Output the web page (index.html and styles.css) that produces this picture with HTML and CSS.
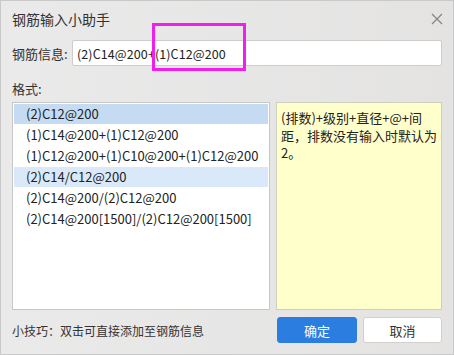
FILE: index.html
```html
<!DOCTYPE html>
<html>
  <head>
    <title>钢筋输入小助手</title>
    <link rel="stylesheet" href="styles.css">
  </head>
  <body>
    <div class="dialog">
      <div class="title-bar">
        <span class="title">钢筋输入小助手</span>
        <svg class="close" width="12" height="12" viewBox="0 0 12 12">
          <path d="M1 1L11 11M11 1L1 11" stroke="#858585" stroke-width="1.2" fill="none" />
        </svg>
      </div>

      <div class="field-row">
        <label for="rebar">钢筋信息:</label>
        <input id="rebar" type="text" value="(2)C14@200+(1)C12@200">
      </div>

      <div class="format-label">格式:</div>

      <div class="main">
        <ul class="format-list">
          <li class="selected">(2)C12@200</li>
          <li>(1)C14@200+(1)C12@200</li>
          <li>(1)C12@200+(1)C10@200+(1)C12@200</li>
          <li class="hover">(2)C14/C12@200</li>
          <li>(2)C14@200/(2)C12@200</li>
          <li>(2)C14@200[1500]/(2)C12@200[1500]</li>
        </ul>
        <div class="note">(排数)+级别+直径+@+间距，排数没有输入时默认为2。</div>
      </div>

      <div class="footer">
        <span class="tip">小技巧：双击可直接添加至钢筋信息</span>
        <button class="btn primary">确定</button>
        <button class="btn">取消</button>
      </div>

      <div class="mark"></div>
    </div>
  </body>
</html>
```

FILE: styles.css
```css
/* Reset */
body,
ul,
li {
  margin: 0;
  padding: 0;
}

body {
  font-family: "Noto Sans CJK SC", "Noto Sans", sans-serif;
  font-size: 13px;
  color: #333;
}

.dialog {
  position: relative;
  width: 454px;
  height: 355px;
  box-sizing: border-box;
  border: 1px solid #c9c9c9;
  background: linear-gradient(to right, #eaeaea, #e4e3e2);
  padding: 0 11px;
  display: flex;
  flex-direction: column;
}

/* Title bar */
.title-bar {
  height: 35px;
  display: flex;
  align-items: center;
  justify-content: space-between;
}

.title {
  font-size: 14px;
  color: #333;
}

.close {
  margin-right: -1px;
}

/* Input row */
.field-row {
  margin-top: 4px;
  display: flex;
  align-items: center;
}

.field-row label {
  width: 60px;
  color: #333;
}

.field-row input {
  flex: 1;
  height: 26px;
  box-sizing: border-box;
  border: 1px solid #cdcdcd;
  border-radius: 2px;
  padding: 0 3px 0 4px;
  font-family: inherit;
  font-size: 12.5px;
  letter-spacing: 0.1px;
  color: #222;
  background: #fff;
  outline: none;
}

.format-label {
  margin-top: 14px;
  margin-bottom: 5px;
  line-height: 17px;
}

/* List + note */
.main {
  height: 208px;
  display: flex;
  gap: 6px;
}

.format-list {
  width: 258px;
  box-sizing: border-box;
  list-style: none;
  background: #fff;
  border: 1px solid #c8c8c8;
  padding: 0 1px;
}

.format-list li {
  height: 20px;
  line-height: 20px;
  margin: 1px 0;
  padding-left: 12px;
  color: #222;
  white-space: nowrap;
  overflow: hidden;
}

.format-list li.selected {
  background-color: #c4dbf1;
}

.format-list li.hover {
  background-color: #d9e9fa;
}

.note {
  flex: 1;
  box-sizing: border-box;
  background: #ffffcc;
  border: 1px solid #cfcfc0;
  padding: 6px 4px;
  line-height: 17.5px;
  color: #222;
}

/* Footer */
.footer {
  margin-top: 7px;
  display: flex;
  align-items: center;
  gap: 6px;
}

.tip {
  flex: 1;
  font-size: 12px;
  color: #333;
}

.btn {
  width: 79px;
  height: 26px;
  border: 1px solid #d0d0d0;
  border-radius: 3px;
  background: #fff;
  font-family: inherit;
  font-size: 13px;
  color: #333;
  cursor: pointer;
}

.btn.primary {
  width: 80px;
  background: #2b7ee0;
  border-color: #2b7ee0;
  color: #fff;
}

/* Highlight annotation */
.mark {
  position: absolute;
  left: 151px;
  top: 22px;
  width: 88px;
  height: 42px;
  border: 3px solid #f01ff0;
}
```
